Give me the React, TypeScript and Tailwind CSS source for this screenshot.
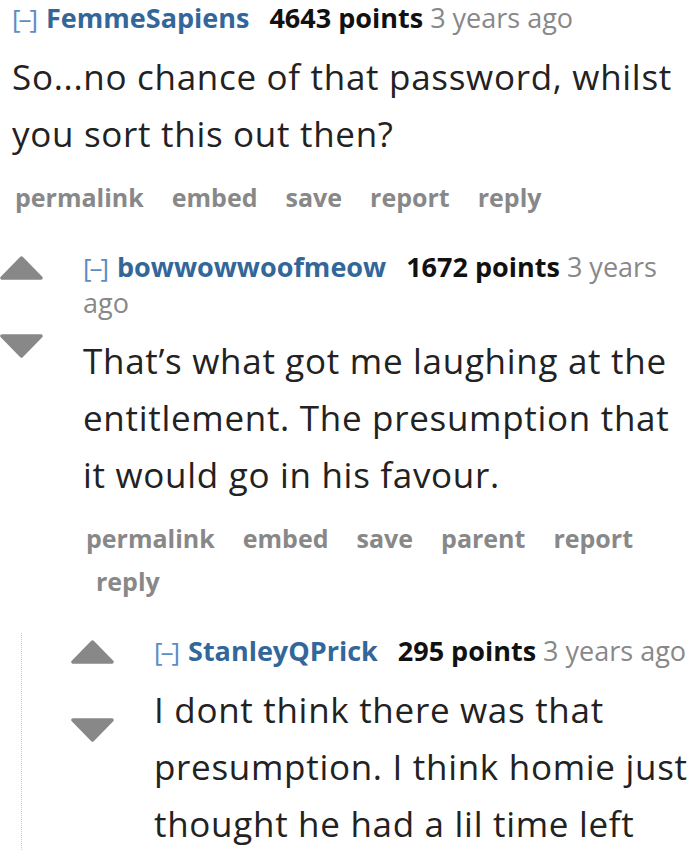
import React from 'react';

type CommentData = {
  author: string;
  points: number;
  age: string;
  body: string;
  actions: string[];
  replies?: CommentData[];
};

const thread: CommentData = {
  author: 'FemmeSapiens',
  points: 4643,
  age: '3 years ago',
  body: 'So...no chance of that password, whilst you sort this out then?',
  actions: ['permalink', 'embed', 'save', 'report', 'reply'],
  replies: [
    {
      author: 'bowwowwoofmeow',
      points: 1672,
      age: '3 years ago',
      body: 'That’s what got me laughing at the entitlement. The presumption that it would go in his favour.',
      actions: ['permalink', 'embed', 'save', 'parent', 'report', 'reply'],
      replies: [
        {
          author: 'StanleyQPrick',
          points: 295,
          age: '3 years ago',
          body: 'I dont think there was that presumption. I think homie just thought he had a lil time left',
          actions: ['permalink', 'embed', 'save', 'parent', 'report', 'reply'],
        },
      ],
    },
  ],
};

const Arrow = ({ down }: { down?: boolean }) => (
  <svg width="45" height="25" viewBox="0 0 45 25" className="block">
    <path
      d={down ? 'M3 3 L42 3 L22.5 23 Z' : 'M3 22 L42 22 L22.5 2 Z'}
      fill="#888"
      stroke="#888"
      strokeWidth="3.5"
      strokeLinejoin="round"
    />
  </svg>
);

const Comment = ({ c }: { c: CommentData }) => {
  return (
    <div className="border-l border-dotted border-[#c4c4f6]">
      <div className="flex pl-[48px]">
        <div className="w-[84px] shrink-0 pt-[7px]">
          <Arrow />
          <div className="h-[52px]" />
          <Arrow down />
        </div>
        <div className="flex-1 min-w-0 pr-[6px]">
          {/* tagline */}
          <p className="text-[27px] leading-[35px] text-[#888]">
            <span className="text-[26px] tracking-[-2px] text-[#5b8cc4] mr-[10px]">[–]</span>
            <span className="font-bold text-[#336699] mr-[20px]">{c.author}</span>
            <span className="font-bold text-[#111]">{c.points} points</span> {c.age}
          </p>

          {/* body */}
          <p className="mt-[12px] text-[35px] leading-[57px] tracking-[0.7px] text-[#222]">{c.body}</p>

          {/* buttons */}
          <ul className="mt-[14px] flex flex-wrap text-[25px] leading-[43px] font-bold text-[#888]">
            {c.actions.map((a, i) => (
              <li key={a} className={i === 0 ? 'pl-[3px] pr-[15px]' : 'pl-[13px] pr-[15px]'}>
                {a}
              </li>
            ))}
          </ul>
        </div>
      </div>

      {c.replies && (
        <div className="ml-[70px] mt-[30px]">
          {c.replies.map((r) => (
            <Comment key={r.author} c={r} />
          ))}
        </div>
      )}
    </div>
  );
};

export default function App() {
  return (
    <div
      className="w-[700px] h-[851px] overflow-hidden bg-white"
      style={{ fontFamily: '"Open Sans", "Noto Sans", sans-serif' }}
    >
      <div className="ml-[-121px]">
        <Comment c={thread} />
      </div>
    </div>
  );
}
